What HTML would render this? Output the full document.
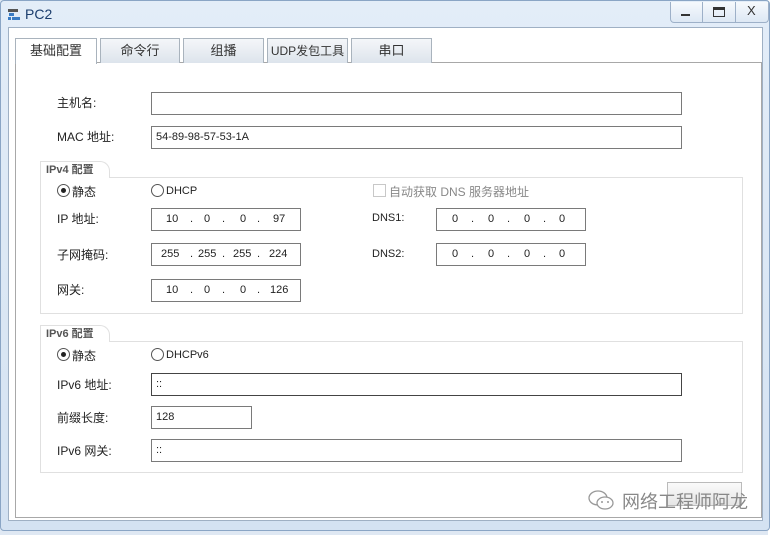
<!DOCTYPE html>
<html><head><meta charset="utf-8"><style>
*{margin:0;padding:0;box-sizing:border-box}
body{width:780px;height:535px;position:relative;overflow:hidden;background:#dfe8f3;font-family:"Liberation Sans","Noto Sans CJK SC",sans-serif;font-size:12px;color:#222}
.abs{position:absolute}
.frame{left:0;top:0;width:770px;height:531px;background:linear-gradient(#e3edf8,#d4e2f2);border:1px solid #8aa5c5;border-radius:4px}
.inner{left:8px;top:27px;width:755px;height:494px;background:#fff;border:1px solid #9fb0c4}
.panel{left:15px;top:62px;width:747px;height:456px;border:1px solid #a8a8a8;background:#fff}
.tab{top:38px;height:25px;background:linear-gradient(#f4f6f9,#dde4ec);border:1px solid #a9b3bd;border-bottom:none;text-align:center;line-height:24px;font-size:13px;color:#333}
.tab.act{background:#fff;height:26px}
.in{border:1px solid #7a7a7a;background:#fff;height:23px;line-height:21px;padding-left:4px;font-size:11px}
.lbl{font-size:12px}
.ip{font-size:11px;line-height:21px;word-spacing:0}
.ip span{position:absolute;top:0}
.grp{border:1px solid #e0e0e0}
.gt{height:17px;background:#fff;border:1px solid #e0e0e0;border-bottom:none;font-weight:bold;color:#555;font-size:11px;padding-left:5px;line-height:16px;border-top-right-radius:10px}
.radio{width:13px;height:13px;border:1px solid #555;border-radius:50%;background:#fff}
.radio.on::after{content:"";position:absolute;left:3px;top:3px;width:5px;height:5px;border-radius:50%;background:#222}
</style></head><body>
<div class="abs" style="left:768px;top:0;width:12px;height:535px;background:#fff"></div>
<div class="abs frame"></div>
<div class="abs" style="left:7px;top:6px;width:14px;height:14px">
<svg width="16" height="16"><rect x="1" y="3" width="10" height="3" fill="#555"/><rect x="2" y="7" width="5" height="3" fill="#3a7cc4"/><rect x="5" y="11" width="8" height="3" fill="#3a7cc4"/><rect x="1" y="11" width="3" height="3" fill="#3a7cc4"/></svg></div>
<div class="abs" style="left:25px;top:6px;font-size:14px;color:#1b3d6d">PC2</div>
<div class="abs" style="left:670px;top:2px;width:99px;height:21px;border:1px solid #9db0c8;border-top:none;border-radius:0 0 4px 4px;background:linear-gradient(#f6f9fd,#dde8f4)"></div>
<div class="abs" style="left:702px;top:2px;width:1px;height:20px;background:#9db0c8"></div>
<div class="abs" style="left:735px;top:2px;width:1px;height:20px;background:#9db0c8"></div>
<div class="abs" style="left:681px;top:14px;width:9px;height:2px;background:#333"></div>
<div class="abs" style="left:713px;top:7px;width:12px;height:10px;border:1px solid #333;border-top-width:3px"></div>
<div class="abs" style="left:747px;top:3px;font-size:13px;color:#333">X</div>
<div class="abs inner"></div>
<div class="abs panel"></div>
<div class="abs tab act" style="left:15px;width:82px">基础配置</div>
<div class="abs tab" style="left:100px;width:80px">命令行</div>
<div class="abs tab" style="left:183px;width:81px">组播</div>
<div class="abs tab" style="left:267px;width:81px;font-size:12px">UDP发包工具</div>
<div class="abs tab" style="left:351px;width:81px">串口</div>

<div class="abs lbl" style="left:57px;top:94px">主机名:</div>
<div class="abs in" style="left:151px;top:92px;width:531px"></div>
<div class="abs lbl" style="left:57px;top:128px">MAC 地址:</div>
<div class="abs in" style="left:151px;top:126px;width:531px;color:#222">54-89-98-57-53-1A</div>

<div class="abs grp" style="left:40px;top:177px;width:703px;height:137px"></div>
<div class="abs gt" style="left:40px;top:161px;width:70px">IPv4 配置</div>
<div class="abs radio on" style="left:57px;top:184px"></div><div class="abs lbl" style="left:72px;top:183px">静态</div>
<div class="abs radio" style="left:151px;top:184px"></div><div class="abs" style="left:166px;top:185px;font-size:11px">DHCP</div>
<div class="abs" style="left:373px;top:184px;width:13px;height:13px;border:1px solid #c8c8c8"></div>
<div class="abs" style="left:389px;top:183px;color:#888">自动获取 DNS 服务器地址</div>

<div class="abs lbl" style="left:57px;top:210px">IP 地址:</div>
<div class="abs in ip" style="left:151px;top:208px;width:150px"><span style="left:14px">10</span><span style="left:38px">.</span><span style="left:52px">0</span><span style="left:70px">.</span><span style="left:88px">0</span><span style="left:105px">.</span><span style="left:121px">97</span></div>
<div class="abs lbl" style="left:57px;top:246px">子网掩码:</div>
<div class="abs in ip" style="left:151px;top:243px;width:150px"><span style="left:9px">255</span><span style="left:38px">.</span><span style="left:46px">255</span><span style="left:70px">.</span><span style="left:81px">255</span><span style="left:105px">.</span><span style="left:117px">224</span></div>
<div class="abs lbl" style="left:57px;top:281px">网关:</div>
<div class="abs in ip" style="left:151px;top:279px;width:150px"><span style="left:14px">10</span><span style="left:38px">.</span><span style="left:52px">0</span><span style="left:70px">.</span><span style="left:88px">0</span><span style="left:105px">.</span><span style="left:118px">126</span></div>

<div class="abs lbl" style="left:372px;top:212px;font-size:11px">DNS1:</div>
<div class="abs in ip" style="left:436px;top:208px;width:150px"><span style="left:15px">0</span><span style="left:34px">.</span><span style="left:51px">0</span><span style="left:70px">.</span><span style="left:87px">0</span><span style="left:106px">.</span><span style="left:122px">0</span></div>
<div class="abs lbl" style="left:372px;top:248px;font-size:11px">DNS2:</div>
<div class="abs in ip" style="left:436px;top:243px;width:150px"><span style="left:15px">0</span><span style="left:34px">.</span><span style="left:51px">0</span><span style="left:70px">.</span><span style="left:87px">0</span><span style="left:106px">.</span><span style="left:122px">0</span></div>

<div class="abs grp" style="left:40px;top:341px;width:703px;height:132px"></div>
<div class="abs gt" style="left:40px;top:325px;width:70px">IPv6 配置</div>
<div class="abs radio on" style="left:57px;top:348px"></div><div class="abs lbl" style="left:72px;top:347px">静态</div>
<div class="abs radio" style="left:151px;top:348px"></div><div class="abs" style="left:166px;top:349px;font-size:11px">DHCPv6</div>
<div class="abs lbl" style="left:57px;top:376px">IPv6 地址:</div>
<div class="abs in" style="left:151px;top:373px;width:531px;border-color:#444">::</div>
<div class="abs lbl" style="left:57px;top:409px">前缀长度:</div>
<div class="abs in" style="left:151px;top:406px;width:101px">128</div>
<div class="abs lbl" style="left:57px;top:442px">IPv6 网关:</div>
<div class="abs in" style="left:151px;top:439px;width:531px">::</div>

<div class="abs" style="left:667px;top:482px;width:75px;height:24px;border:1px solid #bbb;background:linear-gradient(#fafafa,#e6e6e6)"></div>
<div class="abs" style="left:586px;top:487px;width:30px;height:26px">
<svg width="30" height="26"><ellipse cx="12" cy="11" rx="9" ry="7" fill="none" stroke="#999" stroke-width="1.3"/><ellipse cx="19" cy="16" rx="8" ry="6" fill="#fff" stroke="#999" stroke-width="1.3"/><circle cx="16" cy="15" r="1" fill="#999"/><circle cx="22" cy="15" r="1" fill="#999"/></svg></div>
<div class="abs" style="left:622px;top:488px;font-size:18px;color:#888">网络工程师阿龙</div>
</body></html>
